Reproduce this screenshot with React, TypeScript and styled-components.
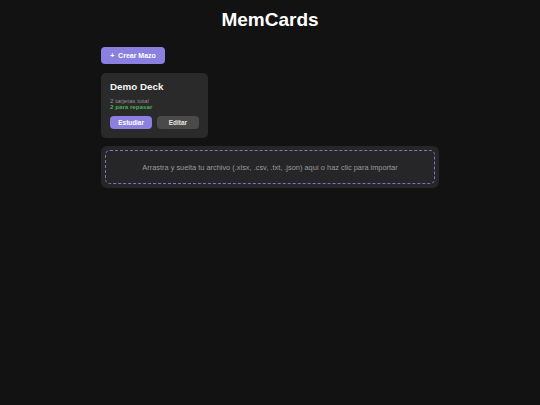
import styled, { createGlobalStyle } from 'styled-components';

const GlobalStyle = createGlobalStyle`
  html, body {
    margin: 0;
    padding: 0;
    background: #121212;
  }

  body {
    font-family: "Liberation Sans", Arial, sans-serif;
    color: #f2f2f2;
  }
`;

const Page = styled.div`
  min-height: 405px;
  background: #121212;
  padding-top: 10px;
  box-sizing: border-box;
`;

const Title = styled.h1`
  margin: 0;
  text-align: center;
  font-size: 19px;
  line-height: 19px;
  font-weight: 700;
  color: #ffffff;
`;

const Main = styled.main`
  width: 338px;
  margin: 18px auto 0;
  display: flex;
  flex-direction: column;
  align-items: flex-start;
`;

const CreateButton = styled.button`
  width: 64px;
  height: 17px;
  padding: 0;
  border: none;
  border-radius: 4px;
  background: #8b7fe0;
  color: #ffffff;
  font-family: inherit;
  font-size: 7px;
  font-weight: 700;
  cursor: pointer;
`;

const DeckGrid = styled.div`
  margin-top: 9px;
  display: grid;
  grid-template-columns: 107px;
  gap: 8px;
`;

const DeckCard = styled.div`
  background: #2a2a2b;
  border-radius: 5px;
  padding: 9px;
  display: flex;
  flex-direction: column;
`;

const DeckName = styled.h2`
  margin: 0;
  font-size: 9.8px;
  line-height: 10px;
  font-weight: 700;
  color: #f4f4f4;
`;

const Stat = styled.div<{ $due?: boolean }>`
  font-size: 6.2px;
  line-height: 6.2px;
  font-weight: ${({ $due }) => ($due ? 700 : 400)};
  color: ${({ $due }) => ($due ? '#4caf50' : '#8e8e8e')};
`;

const Stats = styled.div`
  margin-top: 6px;
`;

const Actions = styled.div`
  margin-top: 6px;
  display: flex;
  gap: 4.5px;
`;

const ActionButton = styled.button<{ $primary?: boolean }>`
  flex: 1;
  height: 13px;
  padding: 0;
  border: none;
  border-radius: 4px;
  background: ${({ $primary }) => ($primary ? '#8b7fe0' : '#4a4a4a')};
  color: ${({ $primary }) => ($primary ? '#ffffff' : '#e6e6e6')};
  font-family: inherit;
  font-size: 6.4px;
  font-weight: 700;
  cursor: pointer;
`;

const DropZone = styled.div`
  margin-top: 8px;
  width: 100%;
  box-sizing: border-box;
  background: #262628;
  border-radius: 6px;
  padding: 4px;
`;

const DropInner = styled.div`
  height: 34px;
  box-sizing: border-box;
  border: 1px dashed #7d72c4;
  border-radius: 5px;
  display: flex;
  align-items: center;
  justify-content: center;
  font-size: 7.4px;
  color: #9a9a9a;
  cursor: pointer;
`;

const decks = [{ name: 'Demo Deck', total: 2, due: 2 }];

export default function App(): JSX.Element {
  return (
    <>
      <GlobalStyle />
      <Page>
        <Title>MemCards</Title>
        <Main>
          <CreateButton>+&nbsp;&nbsp;Crear Mazo</CreateButton>
          <DeckGrid>
            {decks.map((deck) => (
              <DeckCard key={deck.name}>
                <DeckName>{deck.name}</DeckName>
                <Stats>
                  <Stat>{deck.total} tarjetas total</Stat>
                  <Stat $due>{deck.due} para repasar</Stat>
                </Stats>
                <Actions>
                  <ActionButton $primary>Estudiar</ActionButton>
                  <ActionButton>Editar</ActionButton>
                </Actions>
              </DeckCard>
            ))}
          </DeckGrid>
          <DropZone>
            <DropInner>Arrastra y suelta tu archivo (.xlsx, .csv, .txt, .json) aquí o haz clic para importar</DropInner>
          </DropZone>
        </Main>
      </Page>
    </>
  );
}
